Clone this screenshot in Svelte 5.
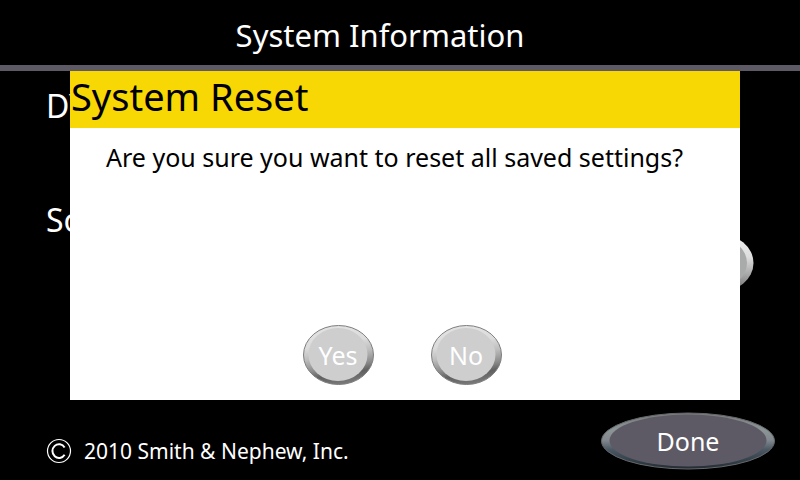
<script>
  let open = $state(true);
  const close = () => (open = false);
</script>

{#snippet pebble(id)}
  <svg class="face" viewBox="0 0 72 62" aria-hidden="true">
    <defs>
      <linearGradient id="{id}-rim" x1="0.4" y1="0" x2="0.6" y2="1">
        <stop offset="0" stop-color="#e2e2e2" />
        <stop offset="0.3" stop-color="#dcdcdc" />
        <stop offset="0.5" stop-color="#bcbcbc" />
        <stop offset="0.7" stop-color="#8a8a8a" />
        <stop offset="0.82" stop-color="#606060" />
        <stop offset="1" stop-color="#7c7c7c" />
      </linearGradient>
    </defs>
    <ellipse cx="36.5" cy="31" rx="35" ry="29.5" fill="url(#{id}-rim)" stroke="#7e7e7e" />
    <ellipse cx="36" cy="30.5" rx="29.5" ry="26.5" fill="#cecece" />
  </svg>
{/snippet}

<div class="screen">
  <header><h1>System Information</h1></header>

  <main>
    <p>DYONICS</p>
    <p>Software</p>
    <button class="pebble reset" type="button" aria-label="Reset" onclick={() => (open = true)}>
      <svg class="face" viewBox="0 0 72 62" aria-hidden="true">
        <defs>
          <linearGradient id="back-rim" x1="0" y1="0" x2="0" y2="1">
            <stop offset="0" stop-color="#f0f0f0" />
            <stop offset="0.4" stop-color="#dedede" />
            <stop offset="0.65" stop-color="#b0b0b0" />
            <stop offset="1" stop-color="#6a6a6a" />
          </linearGradient>
        </defs>
        <ellipse cx="36" cy="31" rx="35.5" ry="29.5" fill="url(#back-rim)" />
        <ellipse cx="36" cy="31" rx="29" ry="25" fill="#a9abab" />
      </svg>
    </button>
  </main>

  <footer>
    <div class="legal">
      <svg class="copy" viewBox="0 0 26 26" role="img" aria-label="Copyright">
        <circle cx="13" cy="13" r="11.5" fill="none" stroke="#fff" stroke-width="1.2" />
        <path d="M18.6 9.4 A6.6 6.9 0 1 0 18.6 16.8" fill="none" stroke="#fff" stroke-width="2" />
      </svg>
      <span>2010 Smith &amp; Nephew, Inc.</span>
    </div>
    <button class="done" type="button">
      <svg class="face" viewBox="0 0 174 58" aria-hidden="true">
        <defs>
          <linearGradient id="done-rim" x1="0" y1="0" x2="0" y2="1">
            <stop offset="0" stop-color="#77797a" />
            <stop offset="0.3" stop-color="#8b9596" />
            <stop offset="0.48" stop-color="#83898f" />
            <stop offset="0.65" stop-color="#4b5965" />
            <stop offset="0.85" stop-color="#33404a" />
            <stop offset="1" stop-color="#252b32" />
          </linearGradient>
        </defs>
        <ellipse cx="87" cy="29" rx="86.5" ry="28" fill="url(#done-rim)" stroke="#66686a" />
        <ellipse cx="87" cy="28.5" rx="78.5" ry="26" fill="#5d5a65" />
      </svg>
      <span>Done</span>
    </button>
  </footer>

  {#if open}
    <div class="dialog" role="alertdialog" aria-labelledby="dialog-title" aria-describedby="dialog-text">
      <h2 id="dialog-title">System Reset</h2>
      <p id="dialog-text">Are you sure you want to reset all saved settings?</p>
      <div class="actions">
        <button class="pebble" type="button" onclick={close}>{@render pebble('yes')}<span>Yes</span></button>
        <button class="pebble" type="button" onclick={close}>{@render pebble('no')}<span>No</span></button>
      </div>
    </div>
  {/if}
</div>

<style>
  :global(body) {
    margin: 0;
    background: #000;
  }

  .screen {
    position: relative;
    box-sizing: border-box;
    min-height: 100vh;
    display: flex;
    flex-direction: column;
    background: #000;
    color: #fff;
    font-family: 'Noto Sans', Tahoma, sans-serif;
  }

  h1,
  h2,
  p {
    margin: 0;
    font-weight: 400;
  }

  header {
    padding: 15px 40px 10px 0;
    border-bottom: 6px solid #5d5a65;
    text-align: center;
  }

  h1 {
    font-size: 31px;
    line-height: 40px;
  }

  main {
    flex: 1;
    display: flex;
    flex-direction: column;
    padding: 23px 46px 0;
    font-size: 32px;
    line-height: 24px;
  }

  main p + p {
    margin-top: 90px;
  }

  button {
    position: relative;
    display: grid;
    place-items: center;
    padding: 0;
    border: 0;
    background: none;
    color: #fff;
    font: inherit;
    font-size: 25px;
    line-height: 32px;
    cursor: pointer;
  }

  .face {
    position: absolute;
    inset: 0;
    width: 100%;
    height: 100%;
  }

  button span {
    position: relative;
  }

  .pebble {
    width: 72px;
    height: 62px;
  }

  .reset {
    align-self: flex-end;
  }

  footer {
    display: flex;
    justify-content: space-between;
    align-items: center;
    padding: 0 25px 10px 46px;
  }

  .legal {
    display: flex;
    align-items: center;
    gap: 12px;
    padding-top: 20px;
    font-size: 21px;
    line-height: 28px;
  }

  .copy {
    width: 26px;
    height: 26px;
  }

  .done {
    width: 174px;
    height: 58px;
  }

  .dialog {
    position: absolute;
    top: 71px;
    left: 70px;
    right: 60px;
    bottom: 80px;
    display: flex;
    flex-direction: column;
    background: #fff;
    color: #000;
  }

  h2 {
    padding: 0 1px 7px;
    background: #f7d704;
    font-size: 38px;
    line-height: 50px;
  }

  .dialog p {
    padding: 13px 36px;
    font-size: 25px;
    line-height: 32px;
  }

  .actions {
    display: flex;
    justify-content: center;
    gap: 56px;
    margin-top: auto;
    padding: 0 6px 14px 0;
  }
</style>
